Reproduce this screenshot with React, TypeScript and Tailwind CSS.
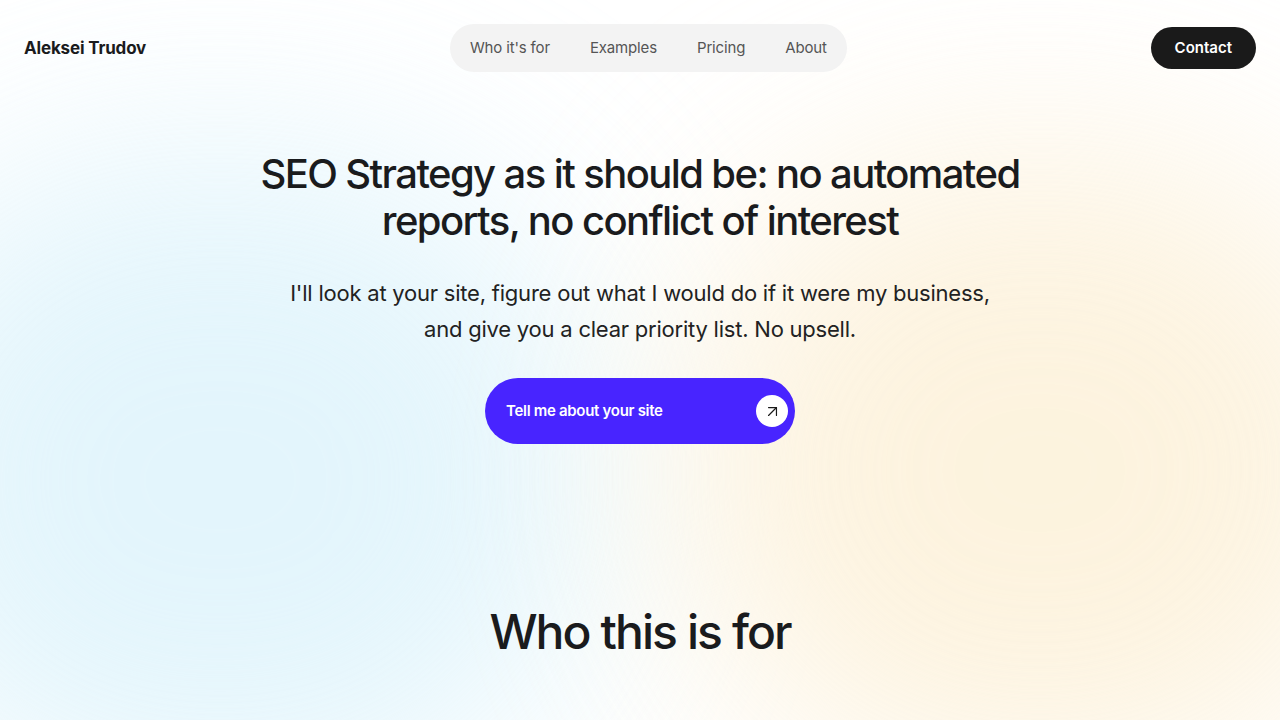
import { ArrowUpRight } from 'lucide-react';

const navItems = ["Who it's for", 'Examples', 'Pricing', 'About'];

export default function App() {
  return (
    <div
      className="relative min-h-screen overflow-hidden bg-white text-[#1a1b1d]"
      style={{ fontFamily: 'Inter, "Noto Sans", sans-serif' }}
    >
      {/* soft background blobs */}
      <div className="pointer-events-none absolute inset-0">
        <div className="absolute left-[-160px] top-[150px] h-[660px] w-[760px] rounded-full bg-[#daf2fb] opacity-75 blur-[110px]" />
        <div className="absolute left-[680px] top-[150px] h-[640px] w-[720px] rounded-full bg-[#fcefd4] opacity-75 blur-[110px]" />
      </div>

      <div className="relative">
        <header className="flex h-24 items-center justify-between px-6">
          <div className="pt-px text-[17px] font-bold tracking-[-0.01em]">Aleksei Trudov</div>
          <nav className="flex h-12 items-center gap-10 rounded-full bg-[#f3f3f3] px-5 text-[15px] tracking-[-0.01em] text-[#555]">
            {navItems.map(item => (
              <a key={item} href="#">
                {item}
              </a>
            ))}
          </nav>
          <button className="h-[42px] rounded-full bg-[#1a1a1a] px-6 text-[15px] font-semibold text-white">
            Contact
          </button>
        </header>

        <section className="flex flex-col items-center pt-[54px] text-center">
          <h1 className="text-[40px] font-medium leading-[47px] tracking-[-0.04em]">
            SEO Strategy as it should be: no automated
            <br />
            reports, no conflict of interest
          </h1>
          <p className="mt-[31px] text-[22px] leading-[36px] tracking-[-0.01em] text-[#222]">
            I'll look at your site, figure out what I would do if it were my business,
            <br />
            and give you a clear priority list. No upsell.
          </p>
          <button className="mt-[31px] flex h-[66px] w-[310px] items-center justify-between rounded-full bg-[#4824ff] pl-[21px] pr-[7px] text-[15px] font-semibold tracking-[-0.02em] text-white">
            Tell me about your site
            <span className="flex h-8 w-8 items-center justify-center rounded-full bg-white text-[#1a1a1a]">
              <ArrowUpRight size={19} strokeWidth={1.5} />
            </span>
          </button>
        </section>

        <section className="flex justify-center pt-[160px]">
          <h2 className="text-[48px] font-medium leading-[56px] tracking-[-0.04em]">Who this is for</h2>
        </section>
      </div>
    </div>
  );
}
